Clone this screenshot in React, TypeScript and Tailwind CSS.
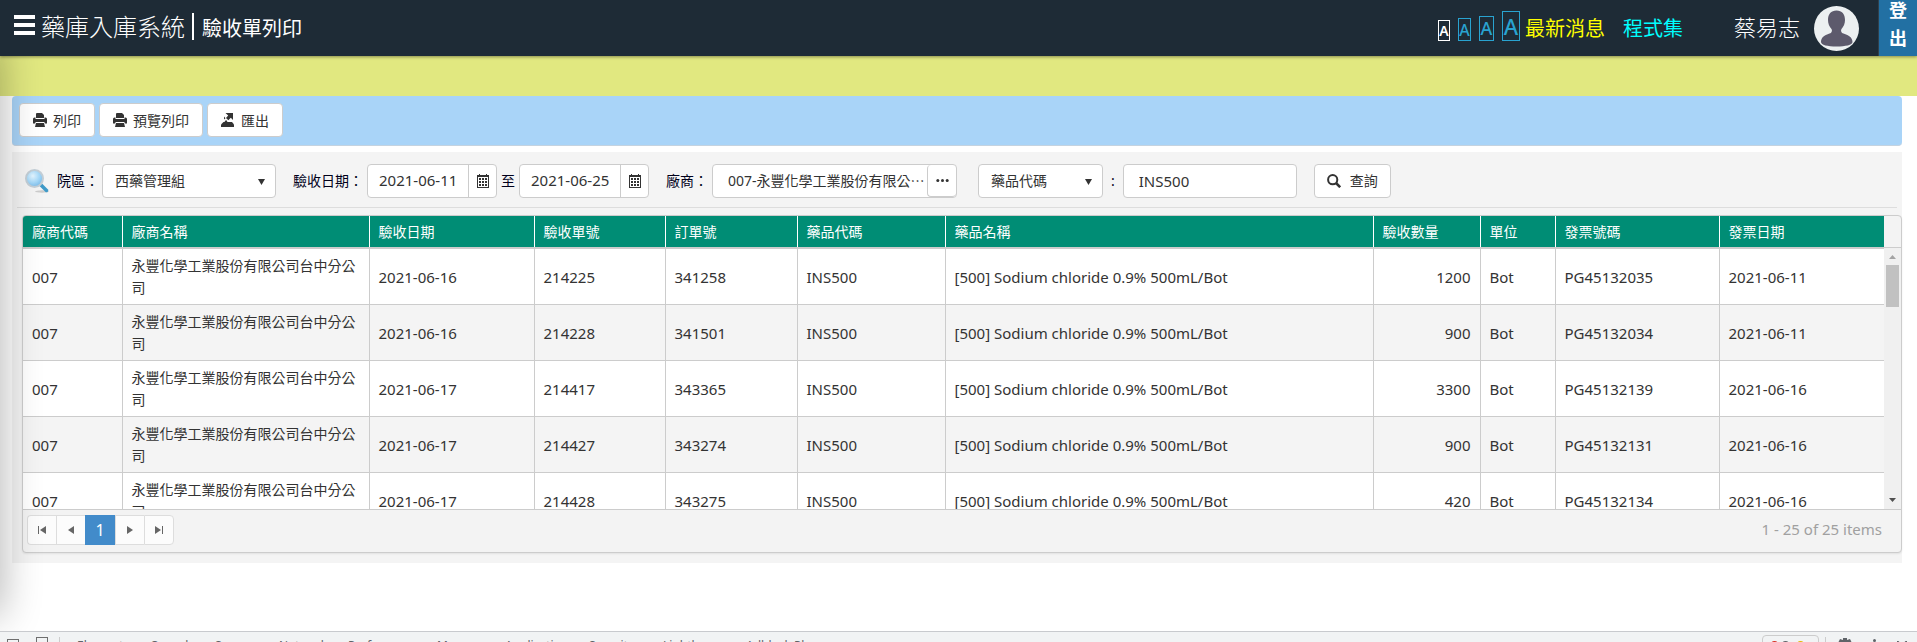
import type { ReactNode } from 'react';

type Row = {
  vendor: string;
  name: string;
  date: string;
  receipt: string;
  order: string;
  code: string;
  drug: string;
  qty: number;
  unit: string;
  invoice: string;
  invoiceDate: string;
};

const NAME = '永豐化學工業股份有限公司台中分公司';
const DRUG = '[500] Sodium chloride 0.9% 500mL/Bot';

function row(date: string, receipt: string, order: string, qty: number, invoice: string, invoiceDate: string): Row {
  return { vendor: '007', name: NAME, date, receipt, order, code: 'INS500', drug: DRUG, qty, unit: 'Bot', invoice, invoiceDate };
}

const ROWS: Row[] = [
  row('2021-06-16', '214225', '341258', 1200, 'PG45132035', '2021-06-11'),
  row('2021-06-16', '214228', '341501', 900, 'PG45132034', '2021-06-11'),
  row('2021-06-17', '214417', '343365', 3300, 'PG45132139', '2021-06-16'),
  row('2021-06-17', '214427', '343274', 900, 'PG45132131', '2021-06-16'),
  row('2021-06-17', '214428', '343275', 420, 'PG45132134', '2021-06-16'),
];

const HEADERS = ['廠商代碼', '廠商名稱', '驗收日期', '驗收單號', '訂單號', '藥品代碼', '藥品名稱', '驗收數量', '單位', '發票號碼', '發票日期'];

const FIELD = 'h-[34px] rounded border border-[#ccc] bg-white text-[#333]';

function Columns() {
  return (
    <colgroup>
      <col className="w-[99px]" />
      <col className="w-[247px]" />
      <col className="w-[165px]" />
      <col className="w-[131px]" />
      <col className="w-[132px]" />
      <col className="w-[148px]" />
      <col />
      <col className="w-[107px]" />
      <col className="w-[75px]" />
      <col className="w-[164px]" />
      <col className="w-[165px]" />
    </colgroup>
  );
}

function PrintIcon() {
  return (
    <svg viewBox="0 0 14 14" className="size-[14px]" fill="#333" aria-hidden="true">
      <path d="M4 0h5l2 2v3H3V1a1 1 0 0 1 1-1z" />
      <path d="M1.500 4.500H2.500V6H11.500V4.500h1A1.500 1.500 0 0 1 14 6V10.500H12L11.300 9H2.700L2 10.500H0V6A1.500 1.500 0 0 1 1.500 4.500z" />
      <path d="M3 10h8l1 4H2z" />
    </svg>
  );
}

function ExportIcon() {
  return (
    <svg viewBox="0 0 14 14" className="size-[14px]" fill="#333" aria-hidden="true">
      <path d="M4.500 0H12v7L9.800 4.800 7.300 7.300 5 5 7.200 2.500z" />
      <path d="M3 3.500 4.500 5.200 3 6.500zM5 7l1.500 1.500L5 9.500H3z" />
      <path d="M2.500 9H11l2 2.500V14H0v-2.500z" />
    </svg>
  );
}

function CalendarIcon() {
  return (
    <svg viewBox="0 0 12 14" className="h-[14px] w-3" fill="#333" aria-hidden="true">
      <path fillRule="evenodd" d="M0 1h2V0h1v1h6V0h1v1h2v13H0zM1 3v10h10V3z" />
      <path d="M2 4h2v2H2zM5 4h2v2H5zM8 4h2v2H8zM2 7h2v2H2zM5 7h2v2H5zM8 7h2v2H8zM2 10h2v2H2zM5 10h2v2H5zM8 10h2v2H8z" />
    </svg>
  );
}

function LensIcon() {
  return (
    <svg viewBox="0 0 24 24" className="size-6 shrink-0" aria-hidden="true">
      <defs>
        <radialGradient id="lens" cx="0.4" cy="0.35" r="0.65">
          <stop offset="0" stopColor="#e4f5ff" />
          <stop offset="0.6" stopColor="#a5d8f8" />
          <stop offset="1" stopColor="#7dbdea" />
        </radialGradient>
      </defs>
      <ellipse cx="17" cy="22.500" rx="7" ry="1.200" fill="#bbb" opacity="0.7" />
      <path d="M15.500 15.500 21.500 21.500" stroke="#3f9ac8" strokeWidth="3.500" strokeLinecap="round" />
      <circle cx="9.500" cy="9.500" r="8.500" fill="url(#lens)" stroke="#c3ced6" strokeWidth="2" />
    </svg>
  );
}

function SearchIcon() {
  return (
    <svg viewBox="0 0 14 14" className="size-[14px]" fill="none" stroke="#333" aria-hidden="true">
      <circle cx="5.700" cy="5.700" r="4.600" strokeWidth="2" />
      <path d="M9 9l4.200 4.200" strokeWidth="2.600" />
    </svg>
  );
}

function ToolButton({ icon, children }: { icon: ReactNode; children: ReactNode }) {
  return (
    <button type="button" className="flex h-[34px] items-center gap-[6px] rounded border border-[#ccc] bg-white px-[13px] text-[14px] text-[#333]">
      {icon}
      {children}
    </button>
  );
}

function Dropdown({ id, label, value, width }: { id: string; label: string; value: string; width: string }) {
  return (
    <div className={`relative ${width}`}>
      <select id={id} aria-label={label} defaultValue={value} className={`${FIELD} w-full appearance-none px-3 text-[14px]`}>
        <option>{value}</option>
      </select>
      <svg viewBox="0 0 7 6" className="pointer-events-none absolute top-[15px] right-[11px] h-[6px] w-[7px]" fill="#333" aria-hidden="true">
        <path d="M0 0h7L3.500 6z" />
      </svg>
    </div>
  );
}

function DateField({ id, label, value }: { id: string; label: string; value: string }) {
  return (
    <div className={`${FIELD} flex w-[130px]`}>
      <input id={id} aria-label={label} defaultValue={value} className="min-w-0 flex-1 pl-[11px] text-[15px] outline-none" />
      <button type="button" aria-label={`${label} 選擇`} className="flex w-7 items-center justify-center border-l border-[#ccc]">
        <CalendarIcon />
      </button>
    </div>
  );
}

function PagerIcon({ path }: { path: string }) {
  return (
    <svg viewBox="0 0 8 8" className="size-2" fill="#666" aria-hidden="true">
      <path d={path} />
    </svg>
  );
}

const PAGER_BUTTON = 'flex h-[30px] items-center justify-center border-y border-l border-[#ddd] bg-[#fcfcfc]';

function Header() {
  return (
    <header className="relative z-10 flex h-14 shrink-0 items-center bg-[#1e2b36] text-white shadow-[0_1px_3px_rgba(0,0,0,0.4)]">
      <button type="button" aria-label="選單" className="ml-[14px] flex w-[21px] flex-col gap-1 pb-[6px]">
        <span className="h-1 bg-white" />
        <span className="h-1 bg-white" />
        <span className="h-1 bg-white" />
      </button>
      <h1 className="ml-[6px] pb-[2px] text-[24px] leading-8 font-light">藥庫入庫系統</h1>
      <span className="ml-[7px] mb-[3px] h-[27px] w-[2px] bg-white" />
      <h2 className="ml-[8px] pt-[2px] text-[20px] leading-6">驗收單列印</h2>
      <div className="ml-auto flex items-center">
        <div className="mb-1 flex h-[30px] items-end gap-2">
          <button type="button" aria-label="字級小" className="h-[21px] w-3 border border-white text-[14px] leading-[19px] font-semibold">A</button>
          <button type="button" aria-label="字級中" className="h-[23px] w-[13px] border border-[#29a3d0] text-[16px] leading-[22px] font-medium text-[#29a3d0]">A</button>
          <button type="button" aria-label="字級大" className="h-[25px] w-[15px] border border-[#29a3d0] text-[18px] leading-[23px] font-medium text-[#29a3d0]">A</button>
          <button type="button" aria-label="字級特大" className="h-[30px] w-[18px] border border-[#29a3d0] text-[22px] leading-[28px] font-medium text-[#29a3d0]">A</button>
        </div>
        <a href="#news" className="ml-[5px] pt-[2px] text-[20px] leading-6 text-[#ff0]">最新消息</a>
        <a href="#programs" className="ml-[18px] pt-[2px] text-[20px] leading-6 text-[#0ff]">程式集</a>
        <span className="ml-[51px] pb-[2px] text-[22px] leading-7 font-light">蔡易志</span>
        <svg viewBox="0 0 45 45" className="ml-[14px] size-[45px]" role="img" aria-label="蔡易志">
          <circle cx="22.500" cy="22.500" r="22.500" fill="#ecf0f1" />
          <path
            d="M22.500 4.500c5.500 0 8.500 3.800 8.500 9.500 0 3.500-1.300 6.700-3.500 9-.8 1.200-.5 3 .6 4 5.500 1.800 10.400 3.800 10.400 9 0 3-7 4.500-16 4.500S7 39 7 36c0-5.200 4.400-7.200 9.900-9 1.100-1 1.400-2.800.6-4-2.200-2.300-3.500-5.500-3.500-9 0-5.700 3-9.500 8.500-9.500z"
            fill="#5d5a6c"
          />
        </svg>
        <button type="button" className="ml-[19px] flex h-14 w-[39px] items-center border-l border-[#30404c] bg-[#2270a3] px-[9px] pb-2 text-[18px] leading-[28px] font-bold">
          登出
        </button>
      </div>
    </header>
  );
}

function Filters() {
  return (
    <form className="flex h-14 items-center gap-[17px] border-b border-[#ddd] pt-[2px] pr-2 pl-2 text-[14px] text-[#00001a]" onSubmit={(e) => e.preventDefault()}>
      <div className="flex items-center gap-[3px]">
        <LensIcon />
        <label htmlFor="site" className="ml-[5px]">院區：</label>
        <Dropdown id="site" label="院區" value="西藥管理組" width="w-[174px]" />
      </div>
      <div className="flex items-center gap-1">
        <label htmlFor="from">驗收日期：</label>
        <DateField id="from" label="驗收日期起" value="2021-06-11" />
        <label htmlFor="to">至</label>
        <DateField id="to" label="驗收日期迄" value="2021-06-25" />
      </div>
      <div className="flex items-center gap-1">
        <label htmlFor="vendor">廠商：</label>
        <div className={`${FIELD} flex w-[245px]`}>
          <input id="vendor" defaultValue="007-永豐化學工業股份有限公⋯" className="min-w-0 flex-1 pl-[15px] outline-none" />
          <button type="button" aria-label="選擇廠商" className="flex h-8 w-[29px] items-center justify-center rounded border-b border-l border-[#ccc]">
            <svg viewBox="0 0 13 3" className="h-[3px] w-[13px]" fill="#333" aria-hidden="true">
              <circle cx="1.800" cy="1.500" r="1.500" />
              <circle cx="6.500" cy="1.500" r="1.500" />
              <circle cx="11.200" cy="1.500" r="1.500" />
            </svg>
          </button>
        </div>
      </div>
      <div className="ml-1 flex items-center gap-2">
        <Dropdown id="kind" label="查詢欄位" value="藥品代碼" width="w-[125px]" />
        <label htmlFor="keyword">:</label>
        <input id="keyword" defaultValue="INS500" className={`${FIELD} w-[174px] pl-[15px] text-[15px]`} />
      </div>
      <button type="submit" className={`${FIELD} flex items-center gap-[9px] px-[12px]`}>
        <SearchIcon />
        查詢
      </button>
    </form>
  );
}

function Grid() {
  return (
    <section className="mt-[7px] ml-[5px] rounded border border-[#ccc] bg-[#f3f3f3] shadow-[0_1px_2px_rgba(0,0,0,0.08)]">
      <div className="flex border-b border-[#ccc]">
        <table className="min-w-0 flex-1 table-fixed rounded-tl-[3px] bg-[#008d75]">
          <Columns />
          <thead>
            <tr>
              {HEADERS.map((h) => (
                <th key={h} className="h-[31px] border-l border-white px-[9px] text-left text-[14px] leading-[22px] font-normal text-white first:border-l-0">
                  {h}
                </th>
              ))}
            </tr>
          </thead>
        </table>
        <div className="w-[17px]" />
      </div>
      <div className="flex h-[261px] overflow-hidden">
        <table className="h-min min-w-0 flex-1 table-fixed self-start bg-white text-[15px] leading-[22px] text-[#333]">
          <Columns />
          <tbody>
            {ROWS.map((r) => (
              <tr key={r.receipt} className="h-14 even:bg-[#f4f4f4] [&>td]:border-t [&>td]:border-l [&>td]:border-[#ccc] [&>td]:px-[9px] [&>td:first-child]:border-l-0">
                <td>{r.vendor}</td>
                <td className="text-[14px]">{r.name}</td>
                <td>{r.date}</td>
                <td>{r.receipt}</td>
                <td>{r.order}</td>
                <td>{r.code}</td>
                <td>{r.drug}</td>
                <td className="text-right">{r.qty}</td>
                <td>{r.unit}</td>
                <td>{r.invoice}</td>
                <td>{r.invoiceDate}</td>
              </tr>
            ))}
          </tbody>
        </table>
        <div className="flex w-[17px] flex-col items-center bg-[#f0f0f0] py-[7px]">
          <svg viewBox="0 0 7 4" className="h-1 w-[7px]" fill="#a3a3a3" aria-hidden="true">
            <path d="M0 4h7L3.500 0z" />
          </svg>
          <div className="mt-[6px] h-[42px] w-[13px] bg-[#c1c1c1]" />
          <svg viewBox="0 0 7 4" className="mt-auto h-1 w-[7px]" fill="#505050" aria-hidden="true">
            <path d="M0 0h7L3.500 4z" />
          </svg>
        </div>
      </div>
      <nav className="flex h-[43px] items-start border-t border-[#ccc] pt-[5px] pr-[19px] pl-1" aria-label="分頁">
        <button type="button" aria-label="第一頁" className={`${PAGER_BUTTON} w-[29px] rounded-l`}>
          <PagerIcon path="M0 0h1v8H0zM8 0v8L2 4z" />
        </button>
        <button type="button" aria-label="上一頁" className={`${PAGER_BUTTON} w-[29px]`}>
          <PagerIcon path="M7 0v8L1 4z" />
        </button>
        <button type="button" className="h-[30px] w-[30px] bg-[#428bca] text-[16px] text-white">1</button>
        <button type="button" aria-label="下一頁" className={`${PAGER_BUTTON} w-[29px]`}>
          <PagerIcon path="M1 0v8l6-4z" />
        </button>
        <button type="button" aria-label="最後一頁" className={`${PAGER_BUTTON} w-[30px] rounded-r border-r`}>
          <PagerIcon path="M7 0h1v8H7zM0 0v8l6-4z" />
        </button>
        <span className="ml-auto text-[15px] leading-7 text-[#a0a0a0]">1 - 25 of 25 items</span>
      </nav>
    </section>
  );
}

const TABS: { name: string; width: string }[] = [
  { name: 'Elements', width: 'w-[73px]' },
  { name: 'Console', width: 'w-[65px]' },
  { name: 'Sources', width: 'w-[64px]' },
  { name: 'Network', width: 'w-[69px]' },
  { name: 'Performance', width: 'w-[89px]' },
  { name: 'Memory', width: 'w-[68px]' },
  { name: 'Application', width: 'w-[84px]' },
  { name: 'Security', width: 'w-[74px]' },
  { name: 'Lighthouse', width: 'w-[83px]' },
  { name: 'Adblock Plus', width: 'w-[110px]' },
];

function InspectorBar() {
  return (
    <footer className="flex h-[11px] shrink-0 items-start overflow-hidden border-t border-[#c8cace] bg-[#f1f3f4] text-[12px] leading-4 text-[#5f6368]">
      <span className="mt-[7px] ml-[7px] h-3 w-3 shrink-0 border border-[#6e6e6e]" />
      <span className="mt-[5px] ml-[17px] h-3 w-3 shrink-0 border border-[#6e6e6e]" />
      <span className="mt-[5px] ml-[11px] h-4 w-px shrink-0 bg-[#ccc]" />
      <div className="mt-[6px] ml-[17px] flex">
        {TABS.map((t) => (
          <span key={t.name} className={`shrink-0 ${t.width}`}>{t.name}</span>
        ))}
      </div>
      <div className="mt-[3px] mr-[10px] ml-auto flex items-start">
        <div className="flex h-5 w-[57px] rounded-sm border border-[#ccc] pt-[5px] pl-2">
          <span className="size-[7px] rounded-full bg-[#d93025]" />
          <span className="ml-1 size-[7px] rounded-full bg-[#5f6368]" />
          <span className="ml-2 size-[7px] rounded-full bg-[#e8b600]" />
        </div>
        <span className="mt-[2px] ml-[6px] h-4 w-px bg-[#ccc]" />
        <svg viewBox="0 0 14 14" className="mt-[3px] ml-[12px] size-[14px]" fill="#5f6368" aria-hidden="true">
          <path d="M5 0h4v2l3-1 2 4-2 2 2 2-2 4-3-1v2H5v-2l-3 1-2-4 2-2-2-2 2-4 3 1z" />
        </svg>
        <span className="mt-1 ml-[21px] size-[3px] rounded-full bg-[#5f6368]" />
        <svg viewBox="0 0 10 10" className="mt-[6px] ml-[21px] size-[10px]" stroke="#5f6368" strokeWidth="2" aria-hidden="true">
          <path d="M0 0l10 10M10 0L0 10" />
        </svg>
      </div>
    </footer>
  );
}

export default function App() {
  return (
    <div className="flex h-screen flex-col overflow-hidden bg-white font-['Noto_Sans','Noto_Sans_CJK_TC',sans-serif]">
      <Header />
      <main className="relative min-h-0 flex-1 overflow-hidden">
        <div className="h-10 bg-[#e1e880]" />
        <div className="mr-[15px] ml-3">
          <div className="flex h-[50px] gap-1 rounded border-b border-[#c5d3e0] bg-[#a9d4f8] pt-[7px] pl-[7px]">
            <ToolButton icon={<PrintIcon />}>列印</ToolButton>
            <ToolButton icon={<PrintIcon />}>預覽列印</ToolButton>
            <ToolButton icon={<ExportIcon />}>匯出</ToolButton>
          </div>
          <div className="mt-[6px] bg-[#f4f4f4] pb-[10px] pl-[5px]">
            <div className="mr-[5px]">
              <Filters />
            </div>
            <Grid />
          </div>
        </div>
        <div className="pointer-events-none absolute -top-4 bottom-4 -left-10 w-10 shadow-[0_0_42px_rgba(0,0,0,0.32)]" />
      </main>
      <InspectorBar />
    </div>
  );
}
